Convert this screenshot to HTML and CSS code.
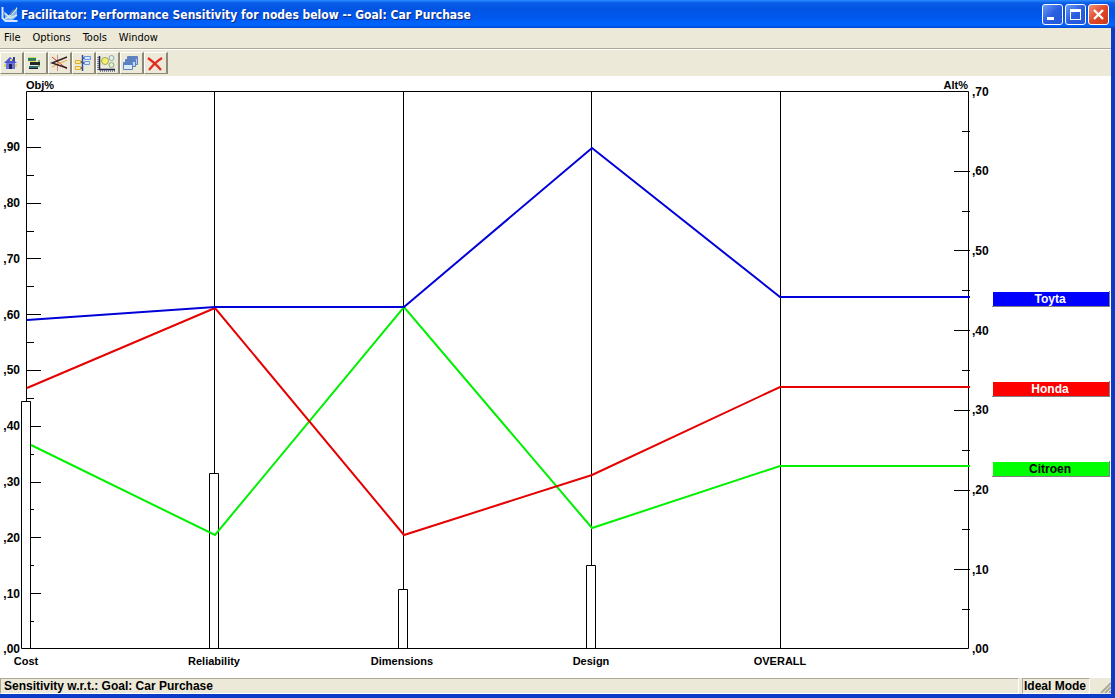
FILE: index.html
```html
<!DOCTYPE html>
<html lang="en">
<head>
<meta charset="utf-8">
<title>Facilitator: Performance Sensitivity</title>
<link rel="stylesheet" href="styles.css">
</head>
<body>
<div class="window">
  <header class="titlebar">
    <svg class="app-icon" width="18" height="18" viewBox="0 0 18 18" fill="none" aria-hidden="true">
      <path d="M2 5l5 6 4-5 5-4v9l-4 4H5z" fill="#7fb4ee"/>
      <path d="M1.500 2v11l3 3h12" stroke="#d5e8ff" stroke-width="2"/>
      <path d="M4 14l5-3 7-8M4 8l5 5 7-3" stroke="#d4ece4" stroke-width="1.500"/>
      <path d="M9 10l6-7" stroke="#3c5878"/>
    </svg>
    <h1 class="title">Facilitator: Performance Sensitivity for nodes below -- Goal: Car Purchase</h1>
    <div class="controls">
      <button class="control" aria-label="Minimize"><svg width="19" height="19" viewBox="0 0 19 19"><path d="M4 12h7v3H4z" fill="#fff"/></svg></button>
      <button class="control" aria-label="Maximize"><svg width="19" height="19" viewBox="0 0 19 19"><path d="M4 4h11v11H4zM5 7v7h9V7z" fill="#fff" fill-rule="evenodd"/></svg></button>
      <button class="control control-close" aria-label="Close"><svg width="19" height="19" viewBox="0 0 19 19"><path d="M5 5l9 9M14 5l-9 9" stroke="#fff" stroke-width="2.400"/></svg></button>
    </div>
  </header>
  <div class="client">
    <nav class="menubar">
      <button class="menu">File</button>
      <button class="menu">Options</button>
      <button class="menu">Tools</button>
      <button class="menu">Window</button>
    </nav>
    <div class="toolbar">
      <button class="tool" aria-label="Home"><svg width="20" height="18" viewBox="0 0 20 18"><path d="M3 9l6-6 7 6z" fill="#4a55d0"/><path d="M5 9h9v6H5z" fill="#6a74d4"/><path d="M12 3h2v4h-2z" fill="#384090"/><path d="M8 10h3v5H8z" fill="#202060"/><path d="M9 5h2v2H9z" fill="#f3df62"/><path d="M3 10h2v3H3zM14 10h2v3h-2z" fill="#d8d66e"/></svg></button>
      <button class="tool" aria-label="Dynamic"><svg width="20" height="18" viewBox="0 0 20 18"><path d="M3 4h8v3H3z" fill="#347b62"/><path d="M3 3h8v1H3z" fill="#c4d96b"/><path d="M5 8h10v3H5z" fill="#20282c"/><path d="M4 7h7v1H4z" fill="#eee15c"/><path d="M4 12h9v3H4z" fill="#286c78"/><path d="M4 14h9v1H4z" fill="#162020"/><path d="M13 6h2v2h-2zM13 11h2v2h-2z" fill="#7cb568"/></svg></button>
      <button class="tool" aria-label="Performance"><svg width="20" height="18" viewBox="0 0 20 18" fill="none"><path d="M8.500 1v16" stroke="#d58a75"/><path d="M3 3l15 12" stroke="#d03a28"/><path d="M3 13L18 6" stroke="#eda23c"/><path d="M18 3L3 9l15 5" stroke="#342028" stroke-width="1.400"/></svg></button>
      <button class="tool" aria-label="Gradient"><svg width="20" height="18" viewBox="0 0 20 18" fill="none"><path d="M9.500 1v16M9 4h3M7 8h2M9 9h3M7 14h2" stroke="#294c9c" stroke-width="1.500"/><path d="M11.500 2.500h6v3h-6zM11.500 7.500h5v3h-5z" fill="#d8e8ff" stroke="#6a94dc"/><path d="M2.500 6.500h5v3h-5zM2.500 12.500h5v3h-5z" fill="#ffed9c" stroke="#e4aa28"/></svg></button>
      <button class="tool" aria-label="Two dimensional"><svg width="20" height="18" viewBox="0 0 20 18" fill="none"><path d="M2.500 2v13.500H18" stroke="#202450" stroke-width="1.500"/><path d="M1 3v13M3 17h15" stroke="#202450" stroke-dasharray="1 1"/><circle cx="8" cy="7" r="3.500" fill="#f5f06c" stroke="#9ba85c"/><circle cx="14.500" cy="4" r="2.500" fill="#e3eee6" stroke="#8ba9ac"/><circle cx="14.500" cy="11" r="2.500" fill="#e3f3c8" stroke="#86a88c"/></svg></button>
      <button class="tool" aria-label="Cascade"><svg width="20" height="18" viewBox="0 0 20 18"><g stroke="#6182b5"><path d="M6.500 2.500h10v8h-10z" fill="#a9cbff"/><path d="M4.500 5.500h10v7h-10z" fill="#bfdbff"/><path d="M2.500 8.500h9v7h-9z" fill="#d8ecff"/></g><path d="M7 3h9v2H7zM5 6h9v2H5zM3 9h8v2H3z" fill="#5a82c8"/></svg></button>
      <button class="tool" aria-label="Close view"><svg width="20" height="18" viewBox="0 0 20 18" fill="none"><path d="M3 4c4 3 9 7 13 12M17 4C12 7 8 11 4 16" stroke="#e32a20" stroke-width="2.200"/></svg></button>
    </div>
    <main class="view">
      <svg class="chart" viewBox="0 76 1111 602" role="img" aria-label="Performance sensitivity chart">
        <g class="axis">
          <path d="M26.500 91.500H968.500V648.500H26.500z"/>
          <path d="M214.500 91V648M403.500 91V648M591.500 91V648M780.500 91V648"/>
          <path d="M26 147.500h15M26 203.500h15M26 258.500h15M26 314.500h15M26 370.500h15M26 426.500h15M26 482.500h15M26 537.500h15M26 593.500h15"/>
          <path d="M26 119.500h8M26 175.500h8M26 231.500h8M26 286.500h8M26 342.500h8M26 398.500h8M26 454.500h8M26 509.500h8M26 565.500h8M26 621.500h8"/>
          <path d="M954 171.500h16M954 250.500h16M954 330.500h16M954 410.500h16M954 490.500h16M954 569.500h16"/>
          <path d="M962 131.500h8M962 211.500h8M962 290.500h8M962 370.500h8M962 450.500h8M962 529.500h8M962 609.500h8"/>
        </g>
        <g class="bars">
          <path d="M21.500 401.500h9v247h-9z"/>
          <path d="M209.500 473.500h9v175h-9z"/>
          <path d="M398.500 589.500h9v59h-9z"/>
          <path d="M586.500 565.500h9v83h-9z"/>
        </g>
        <g class="series">
          <path class="citroen" d="M31 445L215 535L404 307L592 528L780 466H970"/>
          <path class="honda" d="M27 388L215 308L404 535L592 475L780 387H970"/>
          <path class="toyta" d="M27 320L215 307H404L592 148L780 297H970"/>
        </g>
        <g class="label">
          <g class="axis-title">
            <text x="26" y="89">Obj%</text>
            <text class="end" x="968" y="89">Alt%</text>
          </g>
          <g class="end">
            <text x="20" y="151">,90</text><text x="20" y="207">,80</text><text x="20" y="263">,70</text>
            <text x="20" y="319">,60</text><text x="20" y="374">,50</text><text x="20" y="430">,40</text>
            <text x="20" y="486">,30</text><text x="20" y="542">,20</text><text x="20" y="598">,10</text>
            <text x="20" y="653">,00</text>
          </g>
          <g>
            <text x="972" y="96">,70</text><text x="972" y="175">,60</text><text x="972" y="255">,50</text>
            <text x="972" y="335">,40</text><text x="972" y="414">,30</text><text x="972" y="494">,20</text>
            <text x="972" y="574">,10</text><text x="972" y="653">,00</text>
          </g>
          <g class="axis-title middle">
            <text x="26" y="665">Cost</text><text x="214" y="665">Reliability</text>
            <text x="402" y="665">Dimensions</text><text x="591" y="665">Design</text>
            <text x="780" y="665">OVERALL</text>
          </g>
        </g>
        <g class="label middle">
          <path d="M992 307V306H1109V291H1110V307z" fill="#808080"/>
          <rect x="993" y="292" width="116" height="14" fill="#0000ff"/>
          <text class="light" x="1050" y="303">Toyta</text>
          <path d="M992 397V396H1109V381H1110V397z" fill="#808080"/>
          <rect x="993" y="382" width="116" height="14" fill="#ff0000"/>
          <text class="light" x="1050" y="393">Honda</text>
          <path d="M992 477V476H1109V461H1110V477z" fill="#808080"/>
          <rect x="993" y="462" width="116" height="14" fill="#00ff00"/>
          <text x="1050" y="473">Citroen</text>
        </g>
      </svg>
    </main>
    <footer class="statusbar">
      <span class="status status-main">Sensitivity w.r.t.: Goal: Car Purchase</span>
      <span class="status">Ideal Mode</span>
      <svg class="grip" width="18" height="15" viewBox="0 0 18 15" fill="none"><path d="M8 15L18 5M12 15l6-6M16 15l2-2" stroke="#aca998" stroke-width="2"/></svg>
    </footer>
  </div>
</div>
</body>
</html>
```
FILE: styles.css
```css
* { box-sizing: border-box; }

body {
  margin: 0;
  font-family: "Liberation Sans", Arial, sans-serif;
  color: #000;
}

button {
  margin: 0;
  padding: 0;
  border: 0;
  background: none;
  font: inherit;
  color: inherit;
}

.window {
  display: flex;
  flex-direction: column;
  min-height: 100vh;
  background: #0a3cc8;
}

.titlebar {
  display: flex;
  align-items: center;
  height: 28px;
  padding: 0 6px 0 1px;
  gap: 2px;
  background: linear-gradient(#2a8cff 0, #0a5ce8 3px, #0054e3 10px, #0058ee 18px, #0066ff 25px, #0048d0 28px);
}

.title {
  flex: 1;
  margin: 0;
  padding-top: 2px;
  font: bold 12px/16px "DejaVu Sans Condensed", "DejaVu Sans", sans-serif;
  color: #fff;
  text-shadow: 1px 1px #0a2a80;
  white-space: nowrap;
}

.controls {
  display: flex;
  gap: 2px;
  padding-top: 1px;
}

.control {
  width: 21px;
  height: 21px;
  border: 1px solid #fff;
  border-radius: 3px;
  background: linear-gradient(135deg, #6c9cf5, #2a5ee0 50%, #2356d8);
}

.control svg { display: block; }

.control-close { background: linear-gradient(135deg, #f09478, #e0482a 50%, #c83a18); }

.client {
  flex: 1;
  display: flex;
  flex-direction: column;
  margin: 0 4px 4px 0;
  background: #ece9d8;
}

.menubar {
  display: flex;
  align-items: flex-start;
  gap: 12px;
  height: 21px;
  padding: 1px 4px;
  border-bottom: 1px solid #aca998;
  font: 11px/18px "DejaVu Sans Condensed", "DejaVu Sans", sans-serif;
}

.toolbar {
  display: flex;
  height: 27px;
  padding: 2px 0;
  border-top: 1px solid #fff;
}

.tool {
  width: 24px;
  height: 22px;
  border: 1px solid;
  border-color: #fff #8c8978 #8c8978 #fff;
  border-right-width: 2px;
}

.tool svg { display: block; }

.view {
  flex: 1;
  background: #fff;
}

.chart {
  display: block;
  width: 100%;
}

.axis, .bars { fill: none; stroke: #000; }
.bars { fill: #fff; }
.series { fill: none; stroke-width: 2; }
.citroen { stroke: #00f000; }
.honda { stroke: #e60000; }
.toyta { stroke: #0000d8; }

.label { font-size: 12px; font-weight: bold; }
.axis-title { font-size: 11px; }
.end { text-anchor: end; }
.middle { text-anchor: middle; }
.light { fill: #fff; }

.statusbar {
  display: flex;
  gap: 3px;
  height: 16px;
  font-size: 12px;
  font-weight: bold;
  line-height: 15px;
}

.status {
  padding: 0 3px 0 1px;
  border: 1px solid;
  border-color: #aca998 #fff #fff #aca998;
}

.status-main { flex: 1; padding-left: 3px; }
```
